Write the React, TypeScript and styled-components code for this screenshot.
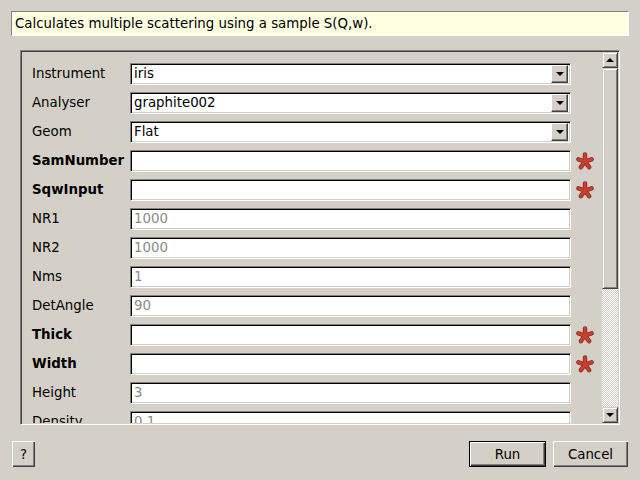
import React from "react";
import styled, { createGlobalStyle } from "styled-components";

const Global = createGlobalStyle`
  html, body { margin: 0; padding: 0; background: #d4d0c8; }
  body { font-family: "DejaVu Sans", "Noto Sans", sans-serif; font-size: 13.33px; color: #000; }
  * { box-sizing: border-box; }
`;

const Window = styled.div`
  width: 640px;
  height: 480px;
  background: #d4d0c8;
  display: flex;
  flex-direction: column;
  overflow: hidden;
`;

const Description = styled.div`
  margin: 11px 11px 0 11px;
  height: 25px;
  background: #ffffe1;
  border-top: 1px solid #808080;
  border-left: 1px solid #808080;
  border-right: 1px solid #ffffff;
  border-bottom: 1px solid #ffffff;
  padding-left: 3px;
  display: flex;
  align-items: center;
  white-space: nowrap;
`;

const Frame = styled.div`
  margin: 14px 20px 0 20px;
  height: 375px;
  display: flex;
  border-top: 1px solid #808080;
  border-left: 1px solid #808080;
  border-right: 1px solid #ffffff;
  border-bottom: 1px solid #ffffff;
  box-shadow: inset 1px 1px 0 #404040, inset -1px -1px 0 #d4d0c8;
  padding: 1px;
`;

const Viewport = styled.div`
  flex: 1;
  overflow: hidden;
  padding: 7px 0 0 10px;
  display: flex;
  flex-direction: column;
`;

const Row = styled.div`
  height: 29px;
  flex: none;
  display: flex;
  align-items: center;
`;

const Label = styled.div<{ $bold?: boolean }>`
  width: 98px;
  flex: none;
  font-weight: ${(p) => (p.$bold ? "bold" : "normal")};
  white-space: nowrap;
`;

const Sunken = styled.div`
  width: 441px;
  height: 22px;
  flex: none;
  background: #fff;
  border-top: 1px solid #808080;
  border-left: 1px solid #808080;
  border-right: 1px solid #ffffff;
  border-bottom: 1px solid #ffffff;
  box-shadow: inset 1px 1px 0 #000, inset -1px -1px 0 #d4d0c8;
  display: flex;
  align-items: center;
  padding-left: 3px;
`;

const Value = styled.span<{ $muted?: boolean }>`
  flex: 1;
  color: ${(p) => (p.$muted ? "#8a8a8a" : "#000")};
  white-space: nowrap;
`;

const DropButton = styled.div`
  width: 17px;
  height: 18px;
  margin-right: 2px;
  flex: none;
  background: #d4d0c8;
  border-top: 1px solid #ffffff;
  border-left: 1px solid #ffffff;
  border-right: 1px solid #404040;
  border-bottom: 1px solid #404040;
  box-shadow: inset -1px -1px 0 #808080;
  display: flex;
  align-items: center;
  justify-content: center;
`;

const Arrow = styled.div<{ $up?: boolean }>`
  width: 0;
  height: 0;
  border-left: 4px solid transparent;
  border-right: 4px solid transparent;
  ${(p) => (p.$up ? "border-bottom: 4px solid #000;" : "border-top: 4px solid #000;")}
`;

const Req = styled.div`
  width: 18px;
  height: 18px;
  margin-left: 5px;
  flex: none;
  display: flex;
`;

const ScrollBar = styled.div`
  width: 16px;
  flex: none;
  display: flex;
  flex-direction: column;
`;

const Raised = styled.div<{ $h: number }>`
  height: ${(p) => p.$h}px;
  flex: none;
  background: #d4d0c8;
  border-top: 1px solid #d4d0c8;
  border-left: 1px solid #d4d0c8;
  border-right: 1px solid #404040;
  border-bottom: 1px solid #404040;
  box-shadow: inset 1px 1px 0 #ffffff, inset -1px -1px 0 #808080;
  display: flex;
  align-items: center;
  justify-content: center;
`;

const Track = styled.div`
  flex: 1;
  background: repeating-conic-gradient(#ffffff 0 25%, #d4d0c8 0 50%) 0 0 / 2px 2px;
`;

const Footer = styled.div`
  margin: 16px 12px 0 12px;
  display: flex;
  align-items: center;
`;

const Button = styled.div<{ $w: number; $default?: boolean }>`
  width: ${(p) => p.$w}px;
  height: 26px;
  background: #d4d0c8;
  display: flex;
  align-items: center;
  justify-content: center;
  border: ${(p) => (p.$default ? "1px solid #000" : "none")};
  box-shadow: inset 1px 1px 0 #ffffff, inset -1px -1px 0 #404040, inset -2px -2px 0 #808080;
`;

const Spacer = styled.div`
  flex: 1;
`;

const Gap = styled.div`
  width: 7px;
`;

const ARMS = [-90, -18, 54, 126, 198];

const Asterisk = () => (
  <svg width="18" height="18" viewBox="0 0 18 18">
    <g strokeLinecap="round">
      {ARMS.map((a) => {
        const r = (a * Math.PI) / 180;
        return (
          <line key={"o" + a} x1="9" y1="9.5" x2={9 + 7 * Math.cos(r)} y2={9.5 + 7 * Math.sin(r)} stroke="#8e2a20" strokeWidth="4.4" />
        );
      })}
      {ARMS.map((a) => {
        const r = (a * Math.PI) / 180;
        return (
          <line key={"i" + a} x1="9" y1="9.5" x2={9 + 7 * Math.cos(r)} y2={9.5 + 7 * Math.sin(r)} stroke="#c8402f" strokeWidth="2.8" />
        );
      })}
    </g>
  </svg>
);

type Field = { label: string; kind: "combo" | "text"; value?: string; req?: boolean };

const fields: Field[] = [
  { label: "Instrument", kind: "combo", value: "iris" },
  { label: "Analyser", kind: "combo", value: "graphite002" },
  { label: "Geom", kind: "combo", value: "Flat" },
  { label: "SamNumber", kind: "text", req: true },
  { label: "SqwInput", kind: "text", req: true },
  { label: "NR1", kind: "text", value: "1000" },
  { label: "NR2", kind: "text", value: "1000" },
  { label: "Nms", kind: "text", value: "1" },
  { label: "DetAngle", kind: "text", value: "90" },
  { label: "Thick", kind: "text", req: true },
  { label: "Width", kind: "text", req: true },
  { label: "Height", kind: "text", value: "3" },
  { label: "Density", kind: "text", value: "0.1" },
];

export default function App() {
  return (
    <Window>
      <Global />
      <Description>Calculates multiple scattering using a sample S(Q,w).</Description>
      <Frame>
        <Viewport>
          {fields.map((f) => (
            <Row key={f.label}>
              <Label $bold={f.req}>{f.label}</Label>
              <Sunken>
                <Value $muted={f.kind === "text"}>{f.value ?? ""}</Value>
                {f.kind === "combo" && (
                  <DropButton>
                    <Arrow />
                  </DropButton>
                )}
              </Sunken>
              {f.req && (
                <Req>
                  <Asterisk />
                </Req>
              )}
            </Row>
          ))}
        </Viewport>
        <ScrollBar>
          <Raised $h={16}>
            <Arrow $up />
          </Raised>
          <Raised $h={221} />
          <Track />
          <Raised $h={16}>
            <Arrow />
          </Raised>
        </ScrollBar>
      </Frame>
      <Footer>
        <Button $w={23}>?</Button>
        <Spacer />
        <Button $w={77} $default>Run</Button>
        <Gap />
        <Button $w={75}>Cancel</Button>
      </Footer>
    </Window>
  );
}
